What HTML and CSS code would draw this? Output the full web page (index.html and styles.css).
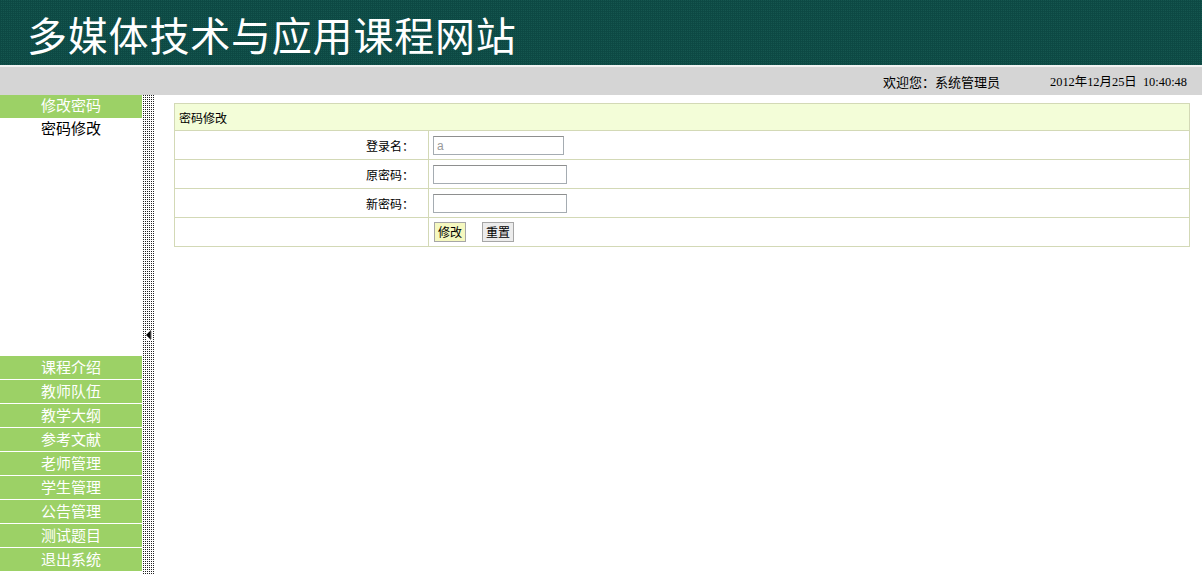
FILE: index.html
```html
<!DOCTYPE html>
<html lang="zh-CN">
<head>
<meta charset="utf-8">
<title>多媒体技术与应用课程网站</title>
<link rel="stylesheet" href="styles.css">
</head>
<body>
<div class="page">
  <header class="banner">
    <h1 class="site-title">多媒体技术与应用课程网站</h1>
  </header>
  <div class="topbar">
    <span class="welcome">欢迎您：系统管理员</span>
    <span class="clock">2012年12月25日&nbsp;&nbsp;10:40:48</span>
  </div>
  <div class="body-row">
    <aside class="sidebar">
      <div class="menu-head">修改密码</div>
      <div class="submenu">
        <div class="submenu-item">密码修改</div>
      </div>
      <ul class="menu-list">
        <li>课程介绍</li>
        <li>教师队伍</li>
        <li>教学大纲</li>
        <li>参考文献</li>
        <li>老师管理</li>
        <li>学生管理</li>
        <li>公告管理</li>
        <li>测试题目</li>
        <li>退出系统</li>
      </ul>
    </aside>
    <div class="splitter">
      <svg class="split-arrow" width="6" height="10" viewBox="0 0 6 10"><path d="M5 0 L0 5 L5 10 Z" fill="#000"/><path d="M5 1 L5 9" stroke="#777" stroke-width="1"/></svg>
    </div>
    <main class="content">
      <table class="form-table">
        <tr><th colspan="2" class="table-head">密码修改</th></tr>
        <tr>
          <td class="label">登录名：</td>
          <td class="field"><input class="txt txt-short readonly" type="text" value="a" readonly></td>
        </tr>
        <tr>
          <td class="label">原密码：</td>
          <td class="field"><input class="txt" type="password"></td>
        </tr>
        <tr>
          <td class="label">新密码：</td>
          <td class="field"><input class="txt" type="password"></td>
        </tr>
        <tr>
          <td class="label"></td>
          <td class="field"><button class="btn btn-submit">修改</button><button class="btn btn-reset">重置</button></td>
        </tr>
      </table>
    </main>
  </div>
</div>
</body>
</html>
```
FILE: styles.css
```css
html, body {
  margin: 0;
  padding: 0;
  background: #fff;
}
body {
  font-family: "Noto Sans CJK SC", "Liberation Sans", sans-serif;
  font-size: 12px;
  color: #000;
}
.page {
  width: 1202px;
  height: 574px;
  display: flex;
  flex-direction: column;
  overflow: hidden;
}
.banner {
  height: 65px;
  background-color: #0d4944;
  background-image: conic-gradient(#15564f 25%, transparent 0);
  background-size: 2px 2px;
  display: flex;
  align-items: center;
  padding-left: 27px;
  border-bottom: 2px solid #f2f2f2;
  box-sizing: content-box;
}
.site-title {
  margin: 0;
  font-family: "Noto Sans CJK SC", sans-serif;
  font-weight: normal;
  font-size: 40px;
  letter-spacing: 0.8px;
  color: #fff;
  line-height: 1;
  position: relative;
  top: 1px;
}
.topbar {
  height: 28px;
  background: #d5d5d5;
  display: flex;
  align-items: center;
  justify-content: flex-end;
  padding-right: 15px;
  font-size: 13px;
}
.welcome {
  margin-right: 50px;
}
.clock {
  font-family: "Liberation Serif", "Noto Sans CJK SC", serif;
  font-size: 12.4px;
}
.body-row {
  flex: 1;
  display: flex;
  min-height: 0;
}
.sidebar {
  width: 142px;
  display: flex;
  flex-direction: column;
}
.menu-head {
  height: 23px;
  background: #9cd166;
  color: #fff;
  font-size: 15px;
  line-height: 20px;
  text-align: center;
}
.submenu {
  flex: 1;
}
.submenu-item {
  font-size: 15px;
  text-align: center;
  line-height: 20px;
  padding-top: 0;
}
.menu-list {
  list-style: none;
  margin: 0 0 3px;
  padding: 0;
}
.menu-list li {
  height: 23px;
  line-height: 21px;
  background: #9cd166;
  color: #fff;
  font-size: 15px;
  text-align: center;
  border-top: 1px solid #fff;
}
.splitter {
  width: 13px;
  background-color: #fff;
  background-image: conic-gradient(#222 25%, transparent 0);
  background-size: 2px 2px;
  display: flex;
  align-items: center;
  justify-content: center;
}
.split-arrow {
  display: block;
  background: #fff;
}
.content {
  flex: 1;
  padding: 8px 12px 0 19px;
}
.form-table {
  width: 100%;
  border-collapse: collapse;
  font-size: 12px;
}
.form-table th,
.form-table td {
  border: 1px solid #d3d9b6;
  padding: 0;
}
.table-head {
  height: 26px;
  background: #f3fdd8;
  text-align: left;
  font-weight: normal;
  padding-left: 4px !important;
}
.label {
  width: 239px;
  height: 28px;
  text-align: right;
  padding-right: 14px !important;
}
.field {
  padding-left: 4px !important;
}
.txt {
  box-sizing: border-box;
  width: 134px;
  height: 19px;
  border: 1px solid #a5acb2;
  border-top-color: #8e8f8f;
  padding: 0 3px;
  font-size: 12px;
  font-family: "Liberation Sans", sans-serif;
  display: block;
  margin-top: 1px;
}
.txt-short {
  width: 131px;
}
.readonly {
  color: #999;
}
.btn {
  height: 20px;
  padding: 0 3px;
  margin: 0 15px 0 1px;
  vertical-align: middle;
  font-family: "Noto Sans CJK SC", sans-serif;
  font-size: 12px;
  line-height: 16px;
  border: 1px solid #a6a6a6;
  color: #000;
}
.btn-submit {
  background: #f5f8bf;
}
.btn-reset {
  background: #ececec;
}
```
